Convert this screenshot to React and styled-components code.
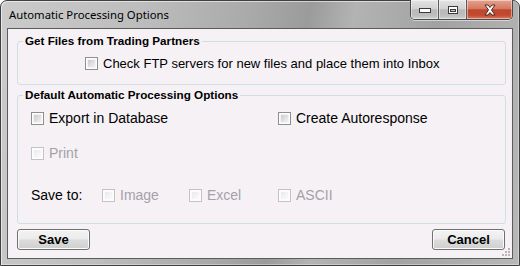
import React from 'react';
import styled, { createGlobalStyle } from 'styled-components';

const GlobalStyle = createGlobalStyle`
  html, body {
    margin: 0;
    padding: 0;
    background: #ffffff;
  }
  body {
    font-family: "Liberation Sans", Arial, sans-serif;
  }
`;

const Window = styled.div`
  box-sizing: border-box;
  width: 520px;
  height: 266px;
  display: flex;
  flex-direction: column;
  padding: 0 6px 6px;
  border: 1px solid #404040;
  border-radius: 7px 7px 0 0;
  background: linear-gradient(100deg, #cbcbcb 0%, #bdbdbd 25%, #a9a9a9 45%, #9b9b9b 55%, #b3b3b3 63%, #a2a2a2 78%, #b8b8b8 100%);
  box-shadow: inset 1px 1px 0 rgba(255, 255, 255, 0.55), inset -1px -1px 0 rgba(255, 255, 255, 0.35);
`;

const TitleBar = styled.div`
  height: 27px;
  display: flex;
  align-items: flex-start;
`;

const TitleText = styled.div`
  padding-left: 2px;
  line-height: 27px;
  font-family: "Noto Sans", "Open Sans", sans-serif;
  font-size: 11.3px;
  color: #000;
`;

const CaptionButtons = styled.div`
  margin-left: auto;
  display: flex;
  height: 19px;
  margin-top: -1px;
  border: 1px solid #4a4a4a;
  border-top: none;
  border-radius: 0 0 5px 5px;
  overflow: hidden;
  box-shadow: 0 1px 0 rgba(255, 255, 255, 0.5);
`;

const CaptionButton = styled.div`
  width: ${p => p.$w}px;
  display: flex;
  align-items: center;
  justify-content: center;
  border-left: ${p => (p.$first ? 'none' : '1px solid #5a5a5a')};
  background: ${p => (p.$close
    ? 'linear-gradient(#e6a18e 0%, #d47a62 45%, #c0452c 52%, #c24a30 80%, #dc7a5e 100%)'
    : 'linear-gradient(#e4e4e4 0%, #d2d2d2 45%, #b9b9b9 52%, #bdbdbd 80%, #d0d0d0 100%)')};
  box-shadow: inset 0 0 0 1px rgba(255, 255, 255, 0.45);
`;

const Client = styled.div`
  position: relative;
  flex: 1;
  display: flex;
  flex-direction: column;
  border: 1px solid #5c5c5c;
  background: #f5f1f5;
`;

const Group = styled.fieldset`
  margin: ${p => p.$top}px 6px 0 9px;
  padding: 0 5px ${p => p.$bottom}px;
  border: 1px solid #d3dde4;
  border-radius: 3px;
  min-width: 0;
`;

const Legend = styled.legend`
  padding: 0 2px;
  font: bold 11.7px/14px "Liberation Sans", Arial, sans-serif;
  color: #000;
`;

const OptionGrid = styled.div`
  margin-top: 6px;
  padding-left: 8px;
  display: grid;
  grid-template-columns: 71px 87px 89px 1fr;
  grid-template-rows: 35px 42px 20px;
  align-items: start;
`;

const Option = styled.label`
  grid-column: ${p => p.$col || 'auto'};
  margin: ${p => p.$margin || '0'};
  height: 20px;
  display: flex;
  align-items: center;
  gap: 5px;
  font-size: ${p => p.$size || 14}px;
  color: ${p => (p.$disabled ? '#a4a1a8' : '#000')};
  white-space: nowrap;
`;

const Box = styled.span`
  box-sizing: border-box;
  width: 13px;
  height: 13px;
  flex: none;
  border: 1px solid ${p => (p.$disabled ? '#c4c2c6' : '#8e8f8f')};
  background: ${p => (p.$disabled ? '#fbfbfb' : '#f4f4f4')};
  box-shadow: inset 0 0 0 1px #fdfdfd;
  position: relative;

  &::after {
    content: '';
    position: absolute;
    inset: 2px;
    background: ${p => (p.$disabled
      ? 'linear-gradient(135deg, #ebe9ec, #fbfbfb)'
      : 'linear-gradient(135deg, #cbcbcb, #f2f2f2)')};
  }
`;

const SaveLabel = styled.div`
  height: 20px;
  display: flex;
  align-items: center;
  font-size: 14px;
  color: #000;
`;

const ButtonRow = styled.div`
  margin: 5px 7px 0 9px;
  display: flex;
  justify-content: space-between;
`;

const Button = styled.button`
  width: 73px;
  height: 21px;
  padding: 0;
  border: 1px solid #707070;
  border-radius: 3px;
  background: linear-gradient(#f3f3f3 0%, #ebebeb 48%, #dcdcdc 52%, #cfcfcf 100%);
  box-shadow: inset 0 0 0 1px #fbfbfb;
  font: bold 13px "Liberation Sans", Arial, sans-serif;
  color: #000;
`;

const Grip = styled.svg`
  position: absolute;
  right: 1px;
  bottom: 1px;
`;

function Check({ label, disabled, col, margin, size }) {
  return (
    <Option $disabled={disabled} $col={col} $margin={margin} $size={size}>
      <Box $disabled={disabled} />
      {label}
    </Option>
  );
}

function MinIcon() {
  return (
    <svg width="14" height="8" viewBox="0 0 14 8">
      <rect x="1.5" y="2.5" width="11" height="4" fill="#fff" stroke="#3a3a3a" />
    </svg>
  );
}

function MaxIcon() {
  return (
    <svg width="12" height="10" viewBox="0 0 12 10">
      <rect x="1.5" y="1.5" width="9" height="7" fill="#fff" stroke="#3a3a3a" />
      <rect x="3.5" y="4.5" width="5" height="2" fill="#c8c8c8" stroke="#3a3a3a" />
    </svg>
  );
}

function CloseIcon() {
  return (
    <svg width="14" height="12" viewBox="0 0 14 12">
      <path d="M2 1 L5 1 L7 3.5 L9 1 L12 1 L8.5 6 L12 11 L9 11 L7 8.5 L5 11 L2 11 L5.5 6 Z" fill="#fff" stroke="#4a2a22" strokeWidth="1" strokeLinejoin="round" />
    </svg>
  );
}

export default function App() {
  return (
    <>
      <GlobalStyle />
      <Window>
        <TitleBar>
          <TitleText>Automatic Processing Options</TitleText>
          <CaptionButtons>
            <CaptionButton $w={27} $first><MinIcon /></CaptionButton>
            <CaptionButton $w={27}><MaxIcon /></CaptionButton>
            <CaptionButton $w={45} $close><CloseIcon /></CaptionButton>
          </CaptionButtons>
        </TitleBar>
        <Client>
          <Group $top={5} $bottom={11}>
            <Legend>Get Files from Trading Partners</Legend>
            <Check label="Check FTP servers for new files and place them into Inbox" size={13} margin="5px 0 0 62px" />
          </Group>
          <Group $top={3} $bottom={18}>
            <Legend>Default Automatic Processing Options</Legend>
            <OptionGrid>
              <Check label="Export in Database" col="1 / span 3" />
              <Check label="Create Autoresponse" col="4" />
              <Check label="Print" disabled col="1 / span 4" />
              <SaveLabel>Save to:</SaveLabel>
              <Check label="Image" disabled />
              <Check label="Excel" disabled />
              <Check label="ASCII" disabled />
            </OptionGrid>
          </Group>
          <ButtonRow>
            <Button>Save</Button>
            <Button>Cancel</Button>
          </ButtonRow>
          <Grip width="10" height="10" viewBox="0 0 10 10">
            {[[7, 1], [7, 4], [4, 4], [7, 7], [4, 7], [1, 7]].map(([x, y]) => (
              <rect key={`${x}-${y}`} x={x} y={y} width="2" height="2" fill="#b8b4b8" />
            ))}
          </Grip>
        </Client>
      </Window>
    </>
  );
}
